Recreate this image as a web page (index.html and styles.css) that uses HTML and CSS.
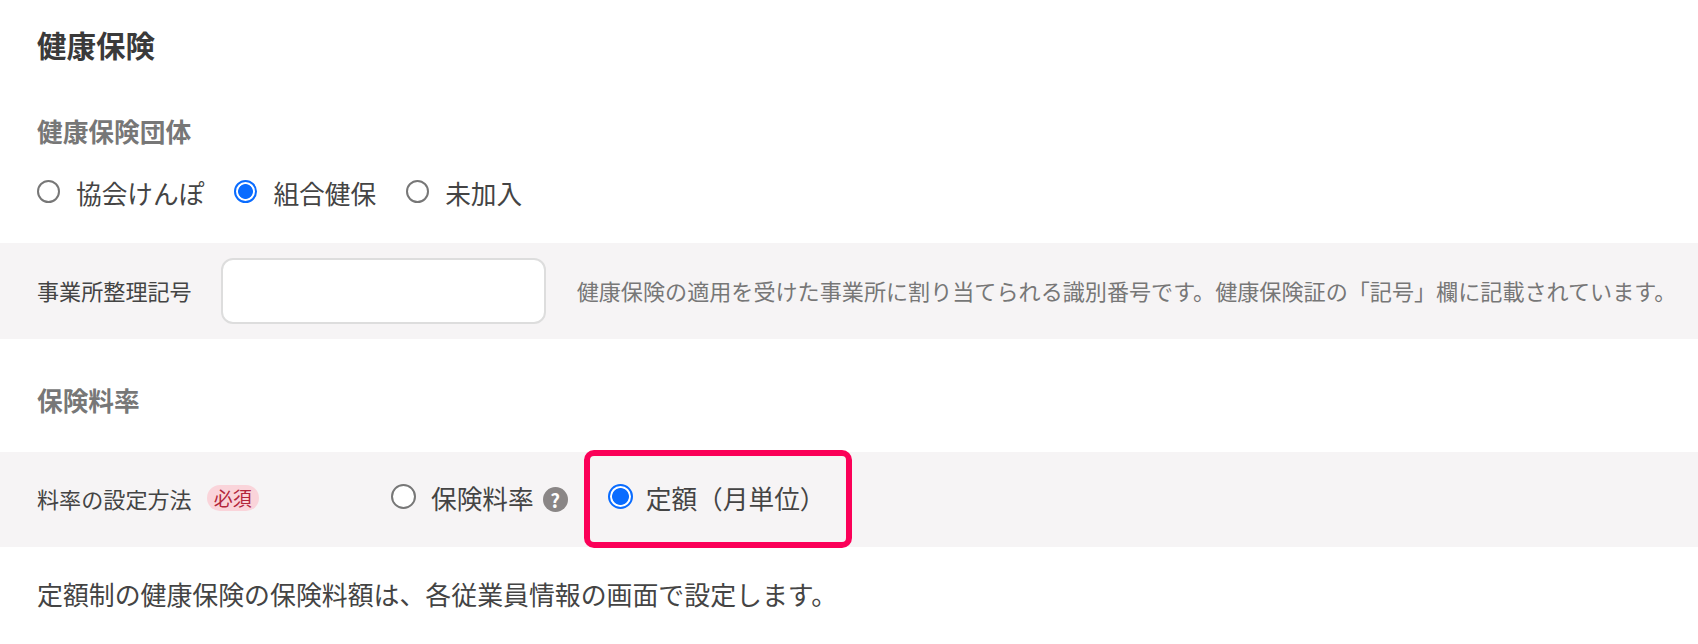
FILE: index.html
```html
<!DOCTYPE html>
<html lang="ja">
<head>
    <meta charset="UTF-8">
    <title>健康保険</title>
    <link rel="stylesheet" href="styles.css">
</head>
<body>
    <h1 class="page-title">健康保険</h1>

    <h2 class="section-title">健康保険団体</h2>
    <div class="radio-group">
        <label class="radio"><input type="radio" name="group"><span>協会けんぽ</span></label>
        <label class="radio"><input type="radio" name="group" checked><span>組合健保</span></label>
        <label class="radio"><input type="radio" name="group"><span>未加入</span></label>
    </div>

    <div class="band band-office">
        <span class="band-label">事業所整理記号</span>
        <input class="text-input" type="text">
        <span class="hint">健康保険の適用を受けた事業所に割り当てられる識別番号です。健康保険証の「記号」欄に記載されています。</span>
    </div>

    <h2 class="section-title section-rate">保険料率</h2>

    <div class="band band-rate">
        <div class="rate-label">
            <span class="band-label">料率の設定方法</span>
            <span class="required">必須</span>
        </div>
        <label class="radio"><input type="radio" name="rate"><span>保険料率</span></label>
        <span class="help-icon">?</span>
        <div class="highlighted">
            <label class="radio"><input type="radio" name="rate" checked><span>定額（月単位）</span></label>
        </div>
    </div>

    <p class="note">定額制の健康保険の保険料額は、各従業員情報の画面で設定します。</p>
</body>
</html>
```

FILE: styles.css
```css
body {
    margin: 0;
    padding-top: 24px;
    background-color: #fff;
    color: #444;
    font-family: "Noto Sans CJK JP", "Noto Sans", sans-serif;
}
.page-title {
    margin: 0 0 0 37px;
    font-size: 29.5px;
    line-height: 40px;
    font-weight: 700;
    color: #3a3a3a;
}
.section-title {
    margin: 49px 0 0 37px;
    font-size: 25.7px;
    line-height: 36px;
    font-weight: 700;
    color: #777;
}
.section-rate {
    margin-top: 43px;
}
.radio-group {
    display: flex;
    gap: 30px;
    margin: 26px 0 32px 37px;
}
.radio {
    display: flex;
    align-items: center;
    gap: 16px;
    font-size: 25.7px;
    line-height: 36px;
}
.radio input {
    appearance: none;
    width: 23px;
    height: 23px;
    margin: 0 0 3px;
    border: 2px solid #777;
    border-radius: 50%;
    background-color: #fff;
}
.radio input:checked {
    border-color: #0a6cff;
    background: radial-gradient(circle, #0a6cff 0, #0a6cff 7px, #fff 7.8px);
}
.band {
    display: flex;
    align-items: center;
    padding-left: 37px;
    background-color: #f6f4f5;
}
.band-office {
    height: 96px;
}
.band-office .band-label {
    margin-bottom: 2px;
}
.band-rate {
    height: 95px;
    margin-top: 34px;
}
.band-rate .radio {
    gap: 15px;
    margin-bottom: 4px;
}
.band-rate .radio input {
    width: 25px;
    height: 25px;
}
.band-rate .radio input:checked {
    background: radial-gradient(circle, #0a6cff 0, #0a6cff 8px, #fff 8.8px);
}
.band-rate .highlighted .radio {
    gap: 13px;
}
.band-label {
    font-size: 22.1px;
    line-height: 32px;
}
.text-input {
    width: 325px;
    height: 66px;
    margin: 0 0 1px 29px;
    box-sizing: border-box;
    border: 2px solid #ddd;
    border-radius: 12px;
    background-color: #fff;
}
.hint {
    margin: 0 0 2px 31px;
    font-size: 22.1px;
    line-height: 32px;
    color: #777;
    white-space: nowrap;
}
.rate-label {
    display: flex;
    align-items: center;
    gap: 15px;
    width: 354px;
    margin-bottom: 3px;
}
.required {
    padding: 0 7px;
    border-radius: 13px;
    background-color: #fad4da;
    color: #b3263c;
    font-size: 19px;
    line-height: 26px;
}
.help-icon {
    width: 25px;
    height: 25px;
    margin-left: 9px;
    border-radius: 50%;
    background-color: #8a8686;
    color: #fff;
    font-size: 19px;
    font-weight: 700;
    line-height: 25px;
    text-align: center;
}
.highlighted {
    position: relative;
    margin-left: 40px;
}
.highlighted::after {
    content: "";
    position: absolute;
    top: -30px;
    bottom: -28px;
    left: -24px;
    right: -26px;
    border: 6px solid #fb0058;
    border-radius: 10px;
}
.note {
    margin: 29px 0 0 37px;
    font-size: 25.9px;
    line-height: 36px;
}
```
